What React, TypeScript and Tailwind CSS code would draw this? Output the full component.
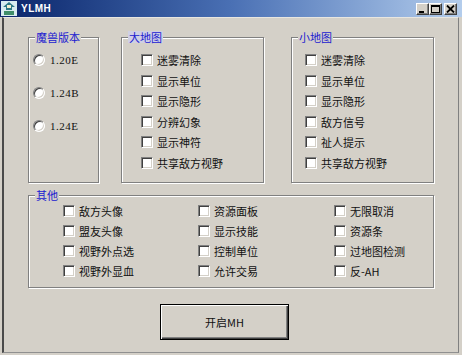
import React from 'react'

const cjk = "font-['Noto_Sans_CJK_SC','Noto_Sans',sans-serif]"

function Check() {
  return (
    <span className="block w-[12px] h-[12px] shrink-0 bg-white border border-t-[#808080] border-l-[#808080] border-r-white border-b-white shadow-[inset_1px_1px_0_#404040,inset_-1px_-1px_0_#d4d0c8]" />
  )
}

function Radio() {
  return (
    <span className="block w-[12px] h-[12px] shrink-0 rounded-full bg-white border border-t-[#808080] border-l-[#808080] border-r-white border-b-white shadow-[inset_1px_1px_0_#404040,inset_-1px_-1px_0_#d4d0c8]" />
  )
}

function CheckRow({ label }: { label: string }) {
  return (
    <div className="flex items-center h-[12px] gap-[4px]">
      <Check />
      <span className={`${cjk} text-[11px] leading-[12px] text-[#111] whitespace-nowrap`}>{label}</span>
    </div>
  )
}

function Group({ title, className, children, hl }: { title: string; className: string; children: React.ReactNode; hl?: boolean }) {
  return (
    <div className={`relative shrink-0 border border-[#808080] shadow-[1px_1px_0_white,inset_1px_1px_0_white] ${className}`}>
      <span
        className={`absolute left-[6px] -top-[7px] px-[1px] ${cjk} text-[11px] leading-[12px] text-[#1a1ad0] ${hl ? 'bg-[#cfd0e4]' : 'bg-[#d4d0c8]'}`}
      >
        {title}
      </span>
      {children}
    </div>
  )
}

function CaptionButton({ kind }: { kind: 'min' | 'max' | 'close' }) {
  return (
    <span className="flex items-center justify-center w-[13px] h-[12px] bg-[#d4d0c8] border border-t-white border-l-white border-r-[#404040] border-b-[#404040] shadow-[inset_-1px_-1px_0_#808080]">
      <svg width="9" height="8" viewBox="0 0 9 8">
        {kind === 'min' && <rect x="1" y="6" width="5" height="2" fill="#000" />}
        {kind === 'max' && (
          <>
            <rect x="0.5" y="0.5" width="8" height="7" fill="none" stroke="#000" />
            <rect x="0" y="0" width="9" height="2" fill="#000" />
          </>
        )}
        {kind === 'close' && (
          <path d="M1 0.5 L8 7.5 M8 0.5 L1 7.5" stroke="#000" strokeWidth="1.8" />
        )}
      </svg>
    </span>
  )
}

export default function App() {
  const bigMap = ['迷雾清除', '显示单位', '显示隐形', '分辨幻象', '显示神符', '共享敌方视野']
  const smallMap = ['迷雾清除', '显示单位', '显示隐形', '敌方信号', '祉人提示', '共享敌方视野']
  const others = [
    ['敌方头像', '盟友头像', '视野外点选', '视野外显血'],
    ['资源面板', '显示技能', '控制单位', '允许交易'],
    ['无限取消', '资源条', '过地图检测', '反-AH'],
  ]

  return (
    <div className="w-[462px] h-[355px] bg-[#d4d0c8] flex flex-col overflow-hidden">
      {/* title bar */}
      <div className="h-[17px] shrink-0 flex items-center bg-gradient-to-r from-[#0a246a] via-[#4a70b4] to-[#b4cdec] pl-[1px] pr-[5px]">
        <svg width="16" height="15" viewBox="0 0 16 15" className="shrink-0">
          <rect x="0" y="0" width="16" height="15" fill="#d8ecf0" />
          <path d="M8 1 L14 6 L11 6 L11 9 L5 9 L5 6 L2 6 Z" fill="#2e7a86" />
          <rect x="3" y="10" width="10" height="4" fill="#3f8d6a" />
          <rect x="6" y="4" width="4" height="3" fill="#f4f0d0" />
        </svg>
        <span className="ml-[4px] font-['Liberation_Sans',sans-serif] font-bold text-[10px] leading-[12px] text-white tracking-[0.5px]">
          YLMH
        </span>
        <div className="ml-auto flex items-center">
          <CaptionButton kind="min" />
          <CaptionButton kind="max" />
          <span className="w-[2px]" />
          <CaptionButton kind="close" />
        </div>
      </div>

      {/* body */}
      <div className="flex-1 ml-[2px] mr-[3px] mb-[2px] border-t border-t-[#e8e6e0] border-l-2 border-l-[#4a4a4a] border-r border-r-[#808080] border-b border-b-[#909090] pl-[24px] pt-[19px]">
        <div className="flex items-start">
          <Group title="魔兽版本" className="w-[71px] h-[146px]">
            <div className="flex flex-col pt-[16px] pl-[4px] gap-[21px]">
              {['1.20E', '1.24B', '1.24E'].map((v) => (
                <div key={v} className="flex items-center h-[12px] gap-[5px]">
                  <Radio />
                  <span className="font-['Liberation_Serif',serif] text-[11px] leading-[12px] text-[#111] tracking-[0.5px]">{v}</span>
                </div>
              ))}
            </div>
          </Group>

          <Group title="大地图" hl className="ml-[22px] w-[143px] h-[146px]">
            <div className="flex flex-col pt-[16px] pl-[19px] gap-[8.5px]">
              {bigMap.map((l) => (
                <CheckRow key={l} label={l} />
              ))}
            </div>
          </Group>

          <Group title="小地图" className="ml-[27px] w-[143px] h-[146px]">
            <div className="flex flex-col pt-[16px] pl-[13px] gap-[8.5px]">
              {smallMap.map((l) => (
                <CheckRow key={l} label={l} />
              ))}
            </div>
          </Group>
        </div>

        <Group title="其他" className="mt-[12px] w-[406px] h-[93px]">
          <div className="flex pt-[9px] pl-[34px]">
            {others.map((col, i) => (
              <div key={i} className={`flex flex-col gap-[8px] ${i === 0 ? 'w-[135px]' : i === 1 ? 'w-[136px]' : ''}`}>
                {col.map((l) => (
                  <CheckRow key={l} label={l} />
                ))}
              </div>
            ))}
          </div>
        </Group>

        <div className="mt-[16px] ml-[132px] w-[129px] h-[36px] border border-black bg-[#d4d0c8] shadow-[inset_1px_1px_0_white,inset_-1px_-1px_0_#404040,inset_-2px_-2px_0_#808080] flex items-center justify-center">
          <span className={`${cjk} text-[11px] leading-[12px] text-[#111]`}>开启MH</span>
        </div>
      </div>
    </div>
  )
}
